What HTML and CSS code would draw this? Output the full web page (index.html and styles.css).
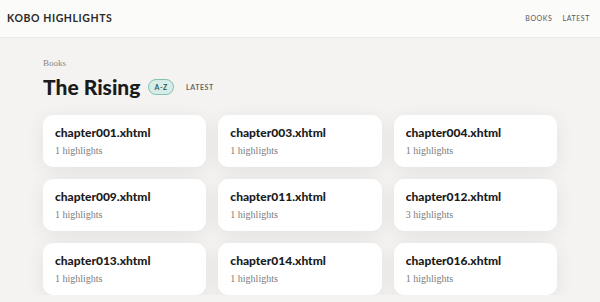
FILE: index.html
```html
<!DOCTYPE html>
<html lang="en">
<head>
    <meta charset="UTF-8">
    <meta name="viewport" content="width=device-width, initial-scale=1.0">
    <title>Kobo Highlights - The Rising</title>
    <link rel="stylesheet" href="styles.css">
</head>
<body>
    <header class="topbar">
        <a class="brand" href="#">KOBO HIGHLIGHTS</a>
        <nav class="nav">
            <a href="#">BOOKS</a>
            <a href="#">LATEST</a>
        </nav>
    </header>

    <main class="page">
        <div class="crumb">Books</div>
        <div class="title-row">
            <h1>The Rising</h1>
            <span class="sort active">A-Z</span>
            <span class="sort">LATEST</span>
        </div>

        <div class="grid">
            <div class="card"><h3>chapter001.xhtml</h3><p>1 highlights</p></div>
            <div class="card"><h3>chapter003.xhtml</h3><p>1 highlights</p></div>
            <div class="card"><h3>chapter004.xhtml</h3><p>1 highlights</p></div>
            <div class="card"><h3>chapter009.xhtml</h3><p>1 highlights</p></div>
            <div class="card"><h3>chapter011.xhtml</h3><p>1 highlights</p></div>
            <div class="card"><h3>chapter012.xhtml</h3><p>3 highlights</p></div>
            <div class="card"><h3>chapter013.xhtml</h3><p>1 highlights</p></div>
            <div class="card"><h3>chapter014.xhtml</h3><p>1 highlights</p></div>
            <div class="card"><h3>chapter016.xhtml</h3><p>1 highlights</p></div>
        </div>
    </main>
</body>
</html>
```

FILE: styles.css
```css
body {
    margin: 0;
    background-color: #f4f3f1;
    font-family: "Lato", "DejaVu Sans", sans-serif;
    color: #1d1d1f;
}
a {
    color: inherit;
    text-decoration: none;
}
.topbar {
    height: 37px;
    display: flex;
    align-items: center;
    justify-content: space-between;
    padding: 0 10px 0 7px;
    background-color: #fbfbfa;
    border-bottom: 1px solid #ebeae7;
}
.brand {
    font-size: 10.5px;
    font-weight: 700;
    letter-spacing: 0.6px;
    color: #2a2a2a;
    margin-top: -2px;
}
.nav {
    display: flex;
    gap: 10px;
    margin-top: -2px;
}
.nav a {
    font-size: 7px;
    letter-spacing: 0.6px;
    color: #555;
}
.page {
    max-width: 514px;
    margin: 0 auto;
    padding: 20px 0 0;
}
.crumb {
    font-family: "Liberation Serif", serif;
    font-size: 9px;
    color: #888;
}
.title-row {
    display: flex;
    align-items: center;
    margin: 6px 0 15px;
}
.title-row h1 {
    margin: 0 8px 0 0;
    font-size: 21px;
    font-weight: 900;
    line-height: 26px;
    color: #1b1b1c;
}
.sort {
    font-size: 7px;
    font-weight: 700;
    letter-spacing: 0.6px;
    color: #666;
    margin-right: 12px;
}
.sort.active {
    padding: 3px 5px;
    border: 1px solid #82c1b5;
    border-radius: 8px;
    background-color: #d7ede8;
    color: #2f5f57;
}
.grid {
    display: grid;
    grid-template-columns: repeat(3, 1fr);
    gap: 12px;
}
.card {
    background-color: #fff;
    border-radius: 10px;
    padding: 11px 12px 10px;
    box-shadow: 0 4px 20px rgba(0, 0, 0, 0.07);
    height: 31px;
}
.card h3 {
    margin: 0;
    font-size: 12px;
    font-weight: 900;
    line-height: 14px;
    color: #1b1b1c;
}
.card p {
    margin: 5px 0 0;
    font-family: "Liberation Serif", serif;
    font-size: 10px;
    color: #7c7c7c;
}
```
